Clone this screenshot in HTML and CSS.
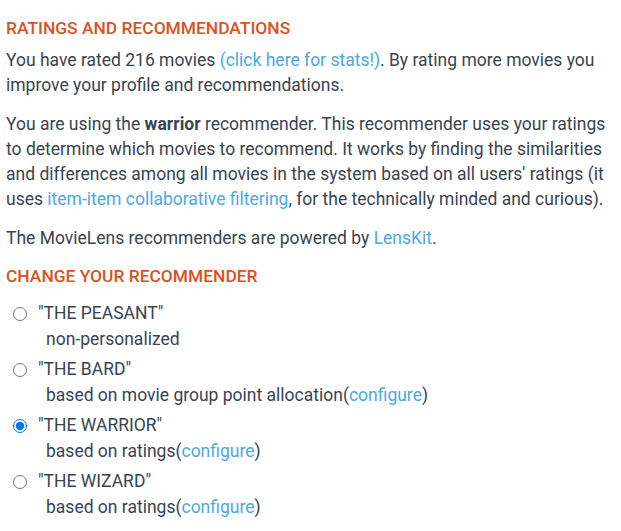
FILE: index.html
```html
<!DOCTYPE html>
<html>
<head>
<meta charset="utf-8">
<link rel="stylesheet" href="styles.css">
</head>
<body>
<div class="page">
  <h2 class="section-title">RATINGS AND RECOMMENDATIONS</h2>
  <p class="text">You have rated 216 movies <a class="link" href="#">(click here for stats!)</a>. By rating more movies you improve your profile and recommendations.</p>
  <p class="text">You are using the <b>warrior</b> recommender. This recommender uses your ratings to determine which movies to recommend. It works by finding the similarities and differences among all movies in the system based on all users' ratings (it uses <a class="link" href="#">item-item collaborative filtering</a>, for the technically minded and curious).</p>
  <p class="text">The MovieLens recommenders are powered by <a class="link" href="#">LensKit</a>.</p>
  <h2 class="section-title second">CHANGE YOUR RECOMMENDER</h2>
  <ul class="options">
    <li class="option">
      <label class="option-head"><input type="radio" name="rec">"THE PEASANT"</label>
      <div class="option-desc">non-personalized</div>
    </li>
    <li class="option">
      <label class="option-head"><input type="radio" name="rec">"THE BARD"</label>
      <div class="option-desc">based on movie group point allocation(<a class="link" href="#">configure</a>)</div>
    </li>
    <li class="option">
      <label class="option-head"><input type="radio" name="rec" checked>"THE WARRIOR"</label>
      <div class="option-desc">based on ratings(<a class="link" href="#">configure</a>)</div>
    </li>
    <li class="option">
      <label class="option-head"><input type="radio" name="rec">"THE WIZARD"</label>
      <div class="option-desc">based on ratings(<a class="link" href="#">configure</a>)</div>
    </li>
  </ul>
</div>
</body>
</html>
```

FILE: styles.css
```css
html, body {
  margin: 0;
  padding: 0;
  background: #ffffff;
}
.page {
  padding: 17px 6px 0 6px;
  font-family: Roboto, "Liberation Sans", sans-serif;
  font-size: 17.5px;
  line-height: 25px;
  color: #3a4350;
  width: 621px;
  box-sizing: border-box;
}
.section-title {
  margin: 0 0 9px 0;
  font-size: 17.4px;
  font-weight: 500;
  line-height: 22px;
  color: #d9531e;
}
.section-title.second {
  margin-top: 14px;
  margin-bottom: 13px;
}
.text {
  margin: 0 0 14px 0;
}
.text:has(+ .section-title) {
  margin-bottom: 0;
}
.link {
  color: #4aa9e3;
  text-decoration: none;
}
b {
  font-weight: 700;
}
.options {
  list-style: none;
  margin: 0;
  padding: 0 0 0 7px;
}
.option {
  margin-bottom: 4px;
}
.option-head {
  display: flex;
  align-items: center;
  gap: 11px;
  line-height: 27px;
}
.option-head input {
  margin: 0;
  width: 14px;
  height: 14px;
}
.option-desc {
  padding-left: 33px;
}
```
